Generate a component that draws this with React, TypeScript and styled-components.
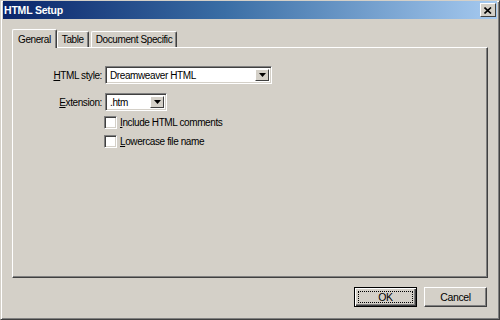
import React from "react";
import styled, { createGlobalStyle } from "styled-components";

const FONT = `"Liberation Sans", Arial, sans-serif`;

const Global = createGlobalStyle`
  html, body { margin: 0; padding: 0; background: #d4d0c8; }
  body { font-family: ${FONT}; font-size: 10px; letter-spacing: -0.4px; color: #000; }
`;

const Window = styled.div`
  width: 500px;
  height: 320px;
  box-sizing: border-box;
  background: #d4d0c8;
  border-left: 1px solid #d4d0c8;
  border-top: 1px solid #d4d0c8;
  border-right: 1px solid #404040;
  border-bottom: 1px solid #404040;
  box-shadow: inset 1px 1px 0 #ffffff, inset -1px -1px 0 #808080;
  padding: 0 2px 2px 2px;
  display: flex;
  flex-direction: column;
`;

const TitleBar = styled.div`
  height: 18px;
  background: linear-gradient(to right, #0a246a 0%, #3a6ea5 45%, #a6caf0 100%);
  display: flex;
  align-items: center;
  justify-content: space-between;
  padding: 0 1px 0 1px;
  flex-shrink: 0;
`;

const Title = styled.span`
  color: #fff;
  font-weight: bold;
  font-size: 10.5px;
  letter-spacing: -0.2px;
`;

const CloseBtn = styled.div`
  width: 16px;
  height: 14px;
  box-sizing: border-box;
  background: #d4d0c8;
  border-top: 1px solid #fff;
  border-left: 1px solid #fff;
  border-right: 1px solid #404040;
  border-bottom: 1px solid #404040;
  display: flex;
  align-items: center;
  justify-content: center;
`;

const Content = styled.div`
  flex: 1;
  display: flex;
  flex-direction: column;
  padding: 10px 9px 0 9px;
`;

const TabStrip = styled.div`
  display: flex;
  align-items: flex-end;
  height: 18px;
  padding-left: 1px;
  position: relative;
  z-index: 1;
`;

const Tab = styled.div<{ $active?: boolean }>`
  box-sizing: border-box;
  height: ${(p) => (p.$active ? "19px" : "16px")};
  padding: 0 ${(p) => (p.$active ? "5px" : "4px")};
  margin: ${(p) => (p.$active ? "0 -1px -1px -1px" : "0 1px 0 1px")};
  background: #d4d0c8;
  border-top: 1px solid #fff;
  border-left: 1px solid #fff;
  border-right: 1px solid #404040;
  box-shadow: inset -1px 0 0 #808080;
  border-top-left-radius: 2px;
  border-top-right-radius: 2px;
  display: flex;
  align-items: center;
`;

const Panel = styled.div`
  height: 231px;
  box-sizing: border-box;
  border-top: 1px solid #fff;
  border-left: 1px solid #fff;
  border-right: 1px solid #404040;
  border-bottom: 1px solid #404040;
  box-shadow: inset -1px -1px 0 #808080;
  padding: 18px 0 0 0;
  display: flex;
  flex-direction: column;
  gap: 9px;
`;

const Row = styled.div`
  display: flex;
  align-items: center;
`;

const Label = styled.label`
  width: 89px;
  text-align: right;
  padding-right: 3px;
`;

const U = styled.span`
  text-decoration: underline;
`;

const Select = styled.div<{ $w: number }>`
  width: ${(p) => p.$w}px;
  height: 18px;
  box-sizing: border-box;
  background: #fff;
  border-top: 1px solid #808080;
  border-left: 1px solid #808080;
  border-right: 1px solid #fff;
  border-bottom: 1px solid #fff;
  box-shadow: inset 1px 1px 0 #404040, inset -1px -1px 0 #d4d0c8;
  display: flex;
  align-items: center;
  padding: 2px;
`;

const SelectText = styled.span`
  flex: 1;
  padding-left: 2px;
`;

const DropBtn = styled.div`
  width: 14px;
  height: 12px;
  box-sizing: border-box;
  background: #d4d0c8;
  border-top: 1px solid #fff;
  border-left: 1px solid #fff;
  border-right: 1px solid #404040;
  border-bottom: 1px solid #404040;
  display: flex;
  align-items: center;
  justify-content: center;
`;

const Checks = styled.div`
  display: flex;
  flex-direction: column;
  gap: 6px;
  padding-left: 91px;
  margin-top: -4px;
`;

const CheckRow = styled.div`
  display: flex;
  align-items: center;
  gap: 3px;
`;

const Box = styled.div`
  width: 13px;
  height: 13px;
  box-sizing: border-box;
  background: #fff;
  border-top: 1px solid #808080;
  border-left: 1px solid #808080;
  border-right: 1px solid #fff;
  border-bottom: 1px solid #fff;
  box-shadow: inset 1px 1px 0 #404040, inset -1px -1px 0 #d4d0c8;
`;

const Buttons = styled.div`
  display: flex;
  justify-content: flex-end;
  gap: 7px;
  padding: 9px 1px 0 0;
`;

const Button = styled.div<{ $default?: boolean }>`
  width: 63px;
  height: 20px;
  box-sizing: border-box;
  background: #d4d0c8;
  display: flex;
  align-items: center;
  justify-content: center;
  position: relative;
  font-size: 10.5px;
  border: 1px solid;
  border-color: ${(p) => (p.$default ? "#000" : "#fff #404040 #404040 #fff")};
  box-shadow: ${(p) =>
    p.$default
      ? "inset 1px 1px 0 #fff, inset -1px -1px 0 #404040, inset -2px -2px 0 #808080"
      : "inset -1px -1px 0 #808080"};
`;

const Focus = styled.span`
  position: absolute;
  inset: 3px;
  border: 1px dotted #000;
`;

const Arrow = () => (
  <svg width="7" height="4" viewBox="0 0 7 4">
    <path d="M0 0H7L3.5 4Z" fill="#000" />
  </svg>
);

export default function App() {
  return (
    <>
      <Global />
      <Window>
        <TitleBar>
          <Title>HTML Setup</Title>
          <CloseBtn>
            <svg width="8" height="7" viewBox="0 0 8 7">
              <path d="M0.5 0.5L7 6.5M7 0.5L0.5 6.5" stroke="#000" strokeWidth="1.6" />
            </svg>
          </CloseBtn>
        </TitleBar>
        <Content>
          <TabStrip>
            <Tab $active>General</Tab>
            <Tab>Table</Tab>
            <Tab>Document Specific</Tab>
          </TabStrip>
          <Panel>
            <Row>
              <Label>
                <U>H</U>TML style:
              </Label>
              <Select $w={167}>
                <SelectText>Dreamweaver HTML</SelectText>
                <DropBtn>
                  <Arrow />
                </DropBtn>
              </Select>
            </Row>
            <Row>
              <Label>
                <U>E</U>xtension:
              </Label>
              <Select $w={62}>
                <SelectText>.htm</SelectText>
                <DropBtn>
                  <Arrow />
                </DropBtn>
              </Select>
            </Row>
            <Checks>
              <CheckRow>
                <Box />
                <span>
                  <U>I</U>nclude HTML comments
                </span>
              </CheckRow>
              <CheckRow>
                <Box />
                <span>
                  <U>L</U>owercase file name
                </span>
              </CheckRow>
            </Checks>
          </Panel>
          <Buttons>
            <Button $default>
              <Focus />
              OK
            </Button>
            <Button>Cancel</Button>
          </Buttons>
        </Content>
      </Window>
    </>
  );
}
